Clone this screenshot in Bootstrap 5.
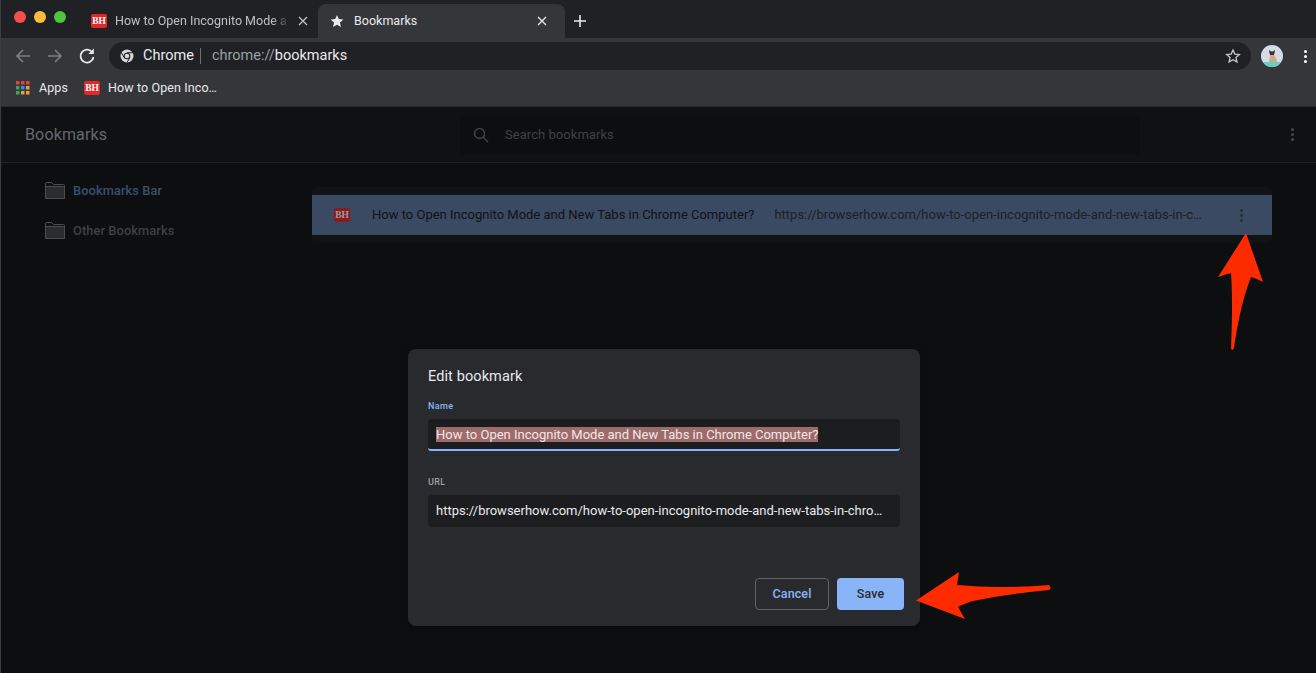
<!DOCTYPE html>
<html lang="en">
<head>
<meta charset="utf-8">
<title>Bookmarks</title>
<link href="https://cdn.jsdelivr.net/npm/bootstrap@5.3.0/dist/css/bootstrap.min.css" rel="stylesheet">
<style>
html,body{height:100%;overflow:hidden}
body{background:#0d0e0f;font-family:Roboto,"Liberation Sans",sans-serif;color:#e8eaed}
.shell{position:relative;width:1316px;height:673px;overflow:hidden;border-left:1px solid #3c3d40}
.strip{height:38px;background:#202124;padding-left:79px;padding-top:4px;position:relative}
.lights{position:absolute;left:13px;top:11px;gap:8px}
.lights i{display:block;width:12px;height:12px;border-radius:50%}
.lights i:nth-child(1){background:#f4504b}
.lights i:nth-child(2){background:#fbbd3c}
.lights i:nth-child(3){background:#4fc63f}
.tabx{height:34px;font-size:12.5px;white-space:nowrap}
.tab-a{width:238px;padding-left:11px;color:#bdc1c6}
.tab-b{width:247px;padding-left:12px;padding-right:18px;background:#35363a;border-radius:8px 8px 0 0;color:#e8eaed}
.fav{display:inline-flex;align-items:center;justify-content:center;width:16px;height:14px;background:#e0282a;border-radius:2px;color:#fff;font:700 9.5px "Liberation Serif",serif;letter-spacing:0;flex:none}
.tabname{overflow:hidden;width:175px;margin-left:8px;margin-right:8px;-webkit-mask-image:linear-gradient(90deg,#000 90%,transparent);mask-image:linear-gradient(90deg,#000 90%,transparent)}
.star-tab{margin-right:10px}
.plus{margin-left:8px;margin-top:10px}
.toolbar{height:36px;background:#35363a;padding-left:13px}
.navi{width:32px;flex:none}
.navi-last{width:31px}
.omni{width:1142px;height:28px;background:#202124;border-radius:14px;padding-left:11px;padding-right:10px;font-size:14.5px;flex:none}
.chromeic{margin-right:9px;flex:none}
.omni-sep{width:1px;height:16px;background:#6f7175;margin:0 11px 0 6px}
.dim{color:#9aa0a6}
.avatar{margin-left:10px;flex:none}
.tb-dots{margin-left:21px}
.barb{height:33px;padding-bottom:4px;background:#35363a;font-size:12.5px;letter-spacing:.1px;color:#e8eaed;padding-left:15px;border-bottom:1px solid #2a2b2e}
.apps-t{margin-left:9px}
.bh-b{margin-left:16px}
.head{height:56px;background:#101113;border-bottom:1px solid #202124;position:relative}
.head-title{font-size:16px;color:#66686b;margin-left:24px;width:435px;letter-spacing:.15px}
.searchb{width:680px;height:40px;background:#0d0e0f;border-radius:4px;padding-left:13px;font-size:13px;color:#3f4144;letter-spacing:.05px}
.head-dots{margin-left:auto;margin-right:22px;color:#47494c}
.side{width:311px;flex:none;padding-left:44px;padding-top:8px}
.treeitem{height:40px;font-size:12.8px;font-weight:500;color:#3f4144;gap:8px;letter-spacing:.1px}
.treeitem.on{color:#3a4f72}
.treeitem svg{margin-top:-1px}
.main-col{padding-top:24px;width:960px}
.listcard{background:#111214;border-radius:4px;padding:8px 0;width:960px}
.rowsel{height:40px;background:#3a4a63;color:#101215;font-size:13px;padding-left:22px;white-space:nowrap}
.fav-d{background:#8a1c1f;color:#9d9d9d}
.rowtitle{margin-left:22px}
.rowurl{margin-left:20px;color:#1d2026}
.row-dots{position:absolute;left:1239px;color:#272d39}
.vdots{width:3px;display:flex;flex-direction:column;gap:2px;flex:none}
.vdots i{display:block;width:3px;height:3px;border-radius:50%;background:currentColor}
.dlg{position:absolute;left:407px;top:349px;width:512px;height:277px;background:#292a2d;border-radius:8px;padding:20px;box-shadow:0 2px 6px rgba(0,0,0,.4)}
.dlg-title{font-size:14.5px;line-height:14px;margin-top:1px;color:#e8eaed;letter-spacing:.1px}
.lbl{font-size:9px;font-weight:500;line-height:10px;letter-spacing:.35px;color:#8ab4f8;margin-top:17px;margin-bottom:8px}
.lbl.grey{color:#9aa0a6;margin-top:26px;margin-bottom:8px}
.fld{height:32px;background:#1c1d1f;border-radius:4px;padding:0 8px;font-size:13px;color:#e8eaed;white-space:nowrap;overflow:hidden}
.fld.focus{border-bottom:2px solid #8ab4f8;border-bottom-left-radius:3px;border-bottom-right-radius:3px}
.picked{background:#9c6b6b;color:#f3e6e6;line-height:15px}
.acts{position:absolute;right:16px;bottom:16px;gap:8px}
.btn-c,.btn-s{height:32px;font-size:12.5px;font-weight:500;border-radius:4px;padding:0;display:flex;align-items:center;justify-content:center;letter-spacing:.1px}
.btn-c{width:74px;background:transparent;border:1px solid #5f6368;color:#8ab4f8}
.btn-s{width:67px;background:#8ab4f8;border:0;color:#292a2d}
.arrows{position:absolute;left:-1px;top:0;width:1316px;height:673px;pointer-events:none}
</style>
</head>
<body>
<div class="shell">
  <div class="strip d-flex">
    <div class="lights d-flex"><i></i><i></i><i></i></div>
    <div class="tabx tab-a d-flex align-items-center">
      <span class="fav">BH</span><span class="tabname">How to Open Incognito Mode a</span>
      <svg width="10" height="10" viewBox="0 0 10 10"><path d="M1 1l8 8M9 1l-8 8" stroke="#bdc1c6" stroke-width="1.3"/></svg>
    </div>
    <div class="tabx tab-b d-flex align-items-center">
      <svg class="star-tab" width="14" height="14" viewBox="0 0 24 24"><path fill="#e8eaed" d="M12 1.5l3.2 7.100 7.700.8-5.800 5.200 1.700 7.600L12 18.300l-6.800 3.900 1.700-7.600L1.100 9.400l7.700-.8z"/></svg>
      <span class="flex-grow-1">Bookmarks</span>
      <svg width="10" height="10" viewBox="0 0 10 10"><path d="M1 1l8 8M9 1l-8 8" stroke="#e8eaed" stroke-width="1.3"/></svg>
    </div>
    <svg class="plus" width="14" height="14" viewBox="0 0 14 14"><path d="M7 1v12M1 7h12" stroke="#e8eaed" stroke-width="1.6"/></svg>
  </div>

  <div class="toolbar d-flex align-items-center">
    <div class="navi d-flex"><svg width="18" height="18" viewBox="0 0 18 18"><path d="M16 9H3M9 3L3 9l6 6" fill="none" stroke="#7c7e82" stroke-width="1.700"/></svg></div>
    <div class="navi d-flex"><svg width="18" height="18" viewBox="0 0 18 18"><path d="M2 9h13M9 3l6 6-6 6" fill="none" stroke="#7c7e82" stroke-width="1.700"/></svg></div>
    <div class="navi navi-last d-flex"><svg width="18" height="18" viewBox="0 0 18 18"><path d="M14.500 5.500A6.500 6.500 0 1 0 15.500 10" fill="none" stroke="#e8eaed" stroke-width="1.800"/><path d="M15.800 1.500v5.400h-5.400z" fill="#e8eaed"/></svg></div>
    <div class="omni d-flex align-items-center">
      <svg class="chromeic" width="14" height="14" viewBox="0 0 14 14"><circle cx="7" cy="7" r="6.500" fill="#d7d8da"/><circle cx="7" cy="7" r="3.300" fill="#202124"/><circle cx="7" cy="7" r="2.300" fill="#d7d8da"/><path d="M7 3.700h6M4.200 8.700L1.300 3.500M9.900 8.600L7 13.400" stroke="#202124" stroke-width="1"/></svg>
      <span>Chrome</span><span class="omni-sep"></span>
      <span class="dim">chrome://</span><span>bookmarks</span>
      <svg class="ms-auto" width="16" height="16" viewBox="0 0 24 24"><path fill="none" stroke="#c4c6c9" stroke-width="2" d="M12 3l2.800 6.100 6.700.7-5 4.500 1.400 6.600L12 17.500l-5.900 3.400 1.400-6.600-5-4.500 6.700-.7z"/></svg>
    </div>
    <svg class="avatar" width="22" height="22" viewBox="0 0 22 22"><defs><clipPath id="av"><circle cx="11" cy="11" r="11"/></clipPath></defs><g clip-path="url(#av)"><rect width="22" height="22" fill="#d5dbeb"/><rect y="17" width="22" height="5" fill="#66d1bd"/><path d="M8 17c.5-3 1-5 1-7L8 5l2 1.500h2L14 5l-1 5c1 2 3 3 3 7z" fill="#c9ad87"/><path d="M8 5l2 1.500h2L14 5l-1 5h-4z" fill="#3a3230"/></g></svg>
    <div class="vdots tb-dots text-white"><i></i><i></i><i></i></div>
  </div>

  <div class="barb d-flex align-items-center">
    <svg width="14" height="14" viewBox="0 0 14 14"><rect width="3.500" height="3.500" fill="#d8473c"/><rect x="5" width="3.500" height="3.500" fill="#d8473c"/><rect x="10" width="3.500" height="3.500" fill="#d8473c"/><rect y="5" width="3.500" height="3.500" fill="#3fa35a"/><rect x="5" y="5" width="3.500" height="3.500" fill="#4285f4"/><rect x="10" y="5" width="3.500" height="3.500" fill="#e2a33b"/><rect y="10" width="3.500" height="3.500" fill="#3fa35a"/><rect x="5" y="10" width="3.500" height="3.500" fill="#e2a33b"/><rect x="10" y="10" width="3.500" height="3.500" fill="#e2a33b"/></svg>
    <span class="apps-t">Apps</span>
    <span class="fav bh-b">BH</span>
    <span class="ms-2">How to Open Inco…</span>
  </div>

  <div class="head d-flex align-items-center">
    <div class="head-title">Bookmarks</div>
    <div class="searchb d-flex align-items-center">
      <svg width="16" height="16" viewBox="0 0 16 16"><circle cx="6.500" cy="6.500" r="5" fill="none" stroke="#3f4144" stroke-width="1.500"/><path d="M10 10l5 5" stroke="#3f4144" stroke-width="1.600"/></svg>
      <span class="ms-3">Search bookmarks</span>
    </div>
    <div class="vdots head-dots"><i></i><i></i><i></i></div>
  </div>

  <div class="d-flex">
    <div class="side">
      <div class="treeitem on d-flex align-items-center">
        <svg width="20" height="17" viewBox="0 0 20 17"><path d="M.5 16.500V1.500a1 1 0 0 1 1-1h5l2 2h10a1 1 0 0 1 1 1v13z" fill="#0f1011" stroke="#4b4c4f"/><path d="M.5 4.500h19v12H.5z" fill="#2b2c2e" stroke="#4b4c4f"/></svg>
        <span>Bookmarks Bar</span>
      </div>
      <div class="treeitem d-flex align-items-center">
        <svg width="20" height="17" viewBox="0 0 20 17"><path d="M.5 16.500V1.500a1 1 0 0 1 1-1h5l2 2h10a1 1 0 0 1 1 1v13z" fill="#0f1011" stroke="#4b4c4f"/><path d="M.5 4.500h19v12H.5z" fill="#2b2c2e" stroke="#4b4c4f"/></svg>
        <span>Other Bookmarks</span>
      </div>
    </div>
    <div class="main-col">
      <div class="listcard">
        <div class="rowsel d-flex align-items-center">
          <span class="fav fav-d">BH</span>
          <span class="rowtitle">How to Open Incognito Mode and New Tabs in Chrome Computer?</span>
          <span class="rowurl">https://browserhow.com/how-to-open-incognito-mode-and-new-tabs-in-c…</span>
          <div class="vdots row-dots"><i></i><i></i><i></i></div>
        </div>
      </div>
    </div>
  </div>

  <div class="dlg">
    <div class="dlg-title">Edit bookmark</div>
    <div class="lbl">Name</div>
    <div class="fld focus d-flex align-items-center"><span class="picked">How to Open Incognito Mode and New Tabs in Chrome Computer?</span></div>
    <div class="lbl grey">URL</div>
    <div class="fld d-flex align-items-center"><span>https://browserhow.com/how-to-open-incognito-mode-and-new-tabs-in-chro…</span></div>
    <div class="acts d-flex">
      <button type="button" class="btn btn-c">Cancel</button>
      <button type="button" class="btn btn-s">Save</button>
    </div>
  </div>

  <svg class="arrows" viewBox="0 0 1316 673">
    <path fill="#fe2a00" d="M1246 233L1218 277Q1226 274 1231 273Q1233 300 1231 348Q1232 352 1234 348Q1240 305 1251 277Q1258 279 1263 282Z"/>
    <path fill="#fe2a00" d="M916 600.500L959 572L957 585Q1000 589 1049 585Q1052 588 1049 590Q1005 594 973 601Q963 604 958 607L965 619Z"/>
  </svg>
</div>
<script src="https://cdn.jsdelivr.net/npm/bootstrap@5.3.0/dist/js/bootstrap.bundle.min.js"></script>
</body>
</html>
